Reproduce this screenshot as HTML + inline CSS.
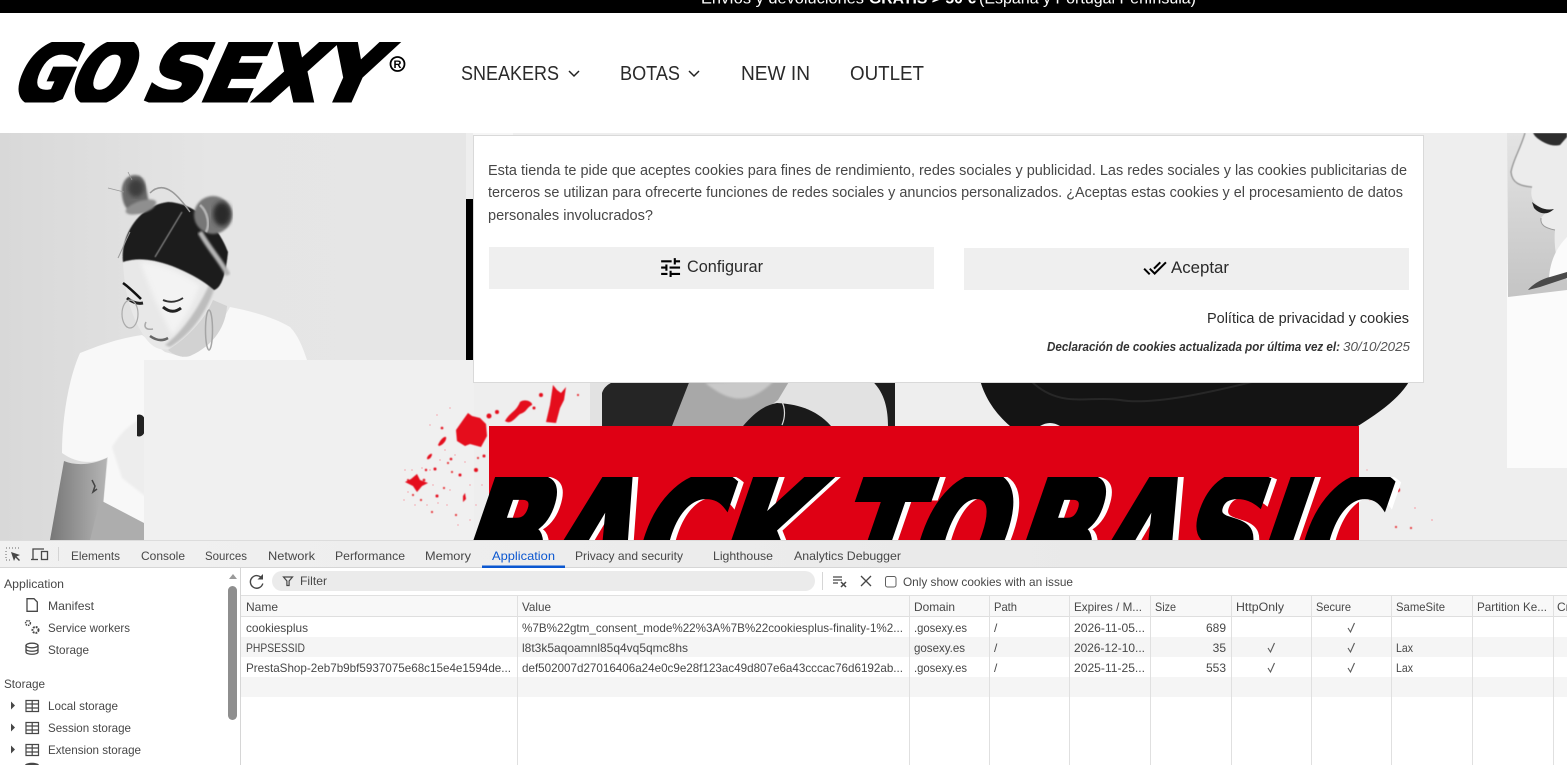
<!DOCTYPE html>
<html lang="es"><head><meta charset="utf-8"><title>Go Sexy</title>
<style>
html,body{margin:0;padding:0;width:1567px;height:765px;overflow:hidden;background:#fff}
svg{display:block}
text{font-family:"Liberation Sans",sans-serif;white-space:pre}
.d text{font-size:12px;fill:#474747}
.c text{font-size:14.5px;fill:#474747}
.n text{font-size:20px;fill:#2a2a2a}
.k text{font-family:"DejaVu Sans",sans-serif;font-weight:bold;stroke-linejoin:miter}
</style></head><body>
<svg width="1567" height="765" viewBox="0 0 1567 765" xmlns="http://www.w3.org/2000/svg">
<defs>
<filter id="b0"><feGaussianBlur stdDeviation=".4"/></filter>
<filter id="b1"><feGaussianBlur stdDeviation="1"/></filter>
<filter id="b2"><feGaussianBlur stdDeviation="2.500"/></filter>
<clipPath id="hero"><rect x="0" y="133" width="1567" height="407"/></clipPath>
<clipPath id="bar"><rect x="0" y="0" width="1567" height="13"/></clipPath>
<clipPath id="logo"><rect x="0" y="42" width="420" height="60.500"/></clipPath>
<linearGradient id="bgl" x1="0" x2="1" y1="0" y2="0"><stop offset="0" stop-color="#d8d8d8"/><stop offset=".45" stop-color="#e5e5e5"/><stop offset="1" stop-color="#e6e6e6"/></linearGradient>
<linearGradient id="arm" x1="0" x2="1" y1="0" y2="0"><stop offset="0" stop-color="#777"/><stop offset="1" stop-color="#b5b5b5"/></linearGradient>
<linearGradient id="rbg" x1="0" x2="0" y1="0" y2="1"><stop offset="0" stop-color="#e4e4e4"/><stop offset="1" stop-color="#c4c4c4"/></linearGradient>
<linearGradient id="tab" x1="0" x2="1" y1="0" y2="0"><stop offset="0" stop-color="#f1f1f1"/><stop offset=".7" stop-color="#e9e9e9"/></linearGradient>
</defs>

<!-- top bar -->
<rect width="1567" height="13" fill="#000"/>
<g clip-path="url(#bar)">
<text x="701" y="3.500" font-size="15.5" fill="#fff" textLength="163" lengthAdjust="spacingAndGlyphs">Envíos y devoluciones</text>
<text x="869" y="3.500" font-size="15.5" font-weight="bold" fill="#fff" textLength="107" lengthAdjust="spacingAndGlyphs">GRATIS &gt; 50 €</text>
<text x="979" y="3.500" font-size="15.5" fill="#fff" textLength="217" lengthAdjust="spacingAndGlyphs">(España y Portugal Península)</text>
</g>

<!-- header -->
<rect y="13" width="1567" height="120" fill="#fff"/>
<g clip-path="url(#logo)">
<g class="k" font-size="82" fill="#000" stroke="#000" stroke-width="4.500">
<text transform="translate(8 102) skewX(-24)" x="0" y="0" textLength="115" lengthAdjust="spacingAndGlyphs">GO</text>
<text transform="translate(139 102) skewX(-24)" x="0" y="0" textLength="232" lengthAdjust="spacingAndGlyphs">SEXY</text>
</g>
</g>
<circle cx="397.500" cy="64" r="7" fill="none" stroke="#000" stroke-width="1.800"/>
<text x="393.500" y="68" font-size="11" font-weight="bold" fill="#000">R</text>
<g class="n">
<text x="461" y="80" textLength="98" lengthAdjust="spacingAndGlyphs">SNEAKERS</text>
<text x="620" y="80" textLength="60" lengthAdjust="spacingAndGlyphs">BOTAS</text>
<text x="741" y="80" textLength="69" lengthAdjust="spacingAndGlyphs">NEW IN</text>
<text x="850" y="80" textLength="74" lengthAdjust="spacingAndGlyphs">OUTLET</text>
</g>
<path d="M569 71l5 5 5-5M689 71l5 5 5-5" fill="none" stroke="#222" stroke-width="1.500"/>

<!-- hero -->
<g clip-path="url(#hero)">
<rect x="0" y="133" width="1567" height="407" fill="#eeeeee"/>
<rect x="0" y="133" width="466" height="407" fill="url(#bgl)"/>
<rect x="466" y="199" width="7" height="161" fill="#000"/>
<rect x="473" y="133" width="40" height="3" fill="#f6f6f6"/>

<!-- girl -->
<g>
 <!-- shirt -->
 <path d="M80 353C100 345 120 338 142 335L165 352 183 357C205 345 220 325 230 307 255 312 275 318 290 327 298 335 303 348 307 360V400H144V540H100L108 457C92 465 76 463 62 453 62 420 68 380 80 353Z" fill="#f8f8f8"/>
 <path d="M112 447C122 430 135 420 150 415V500L122 478Z" fill="#ededed" filter="url(#b1)"/>
 <!-- arm / pants -->
 <path d="M64 461C76 466 92 465 107 458L100 540H50Z" fill="url(#arm)"/>
 <path d="M100 500L144 523V540H90Z" fill="#adadad"/>
 <path d="M137 415C142 413 146 418 146 425 146 433 142 438 137 436Z" fill="#222"/>
 <path d="M92 480l3 6-2 6 4-3" stroke="#444" stroke-width="1.500" fill="none"/>
 <!-- neck -->
 <path d="M168 350C185 340 205 320 213 300L227 306C226 325 215 345 190 356 183 358 175 356 168 350Z" fill="#d2d2d2"/>
 <!-- face -->
 <path d="M123 262C124 285 128 310 142 333 150 346 158 351 168 349 190 338 207 315 214 288L190 268 150 256Z" fill="#e8e8e8"/>
 <path d="M140 262C160 262 180 272 200 285 195 300 185 320 172 335L155 300Z" fill="#f3f3f3" filter="url(#b2)"/>
 <path d="M170 347C190 335 205 315 214 290L210 283C200 305 185 330 165 345Z" fill="#bdbdbd" filter="url(#b1)"/>
 <!-- hair -->
 <path d="M123 262C120 235 140 205 168 202 195 203 218 225 228 252 226 272 222 288 214 290 205 282 192 274 172 266 150 258 135 258 123 262Z" fill="#1a1a1a" filter="url(#b0)"/>
 <path d="M155 257L182 212" stroke="#8a8a8a" stroke-width="1.200" fill="none" filter="url(#b0)"/>
 <path d="M200 232C210 250 222 262 228 275" stroke="#b5b5b5" stroke-width="5" fill="none" filter="url(#b1)"/>
 <path d="M130 232C125 242 122 250 118 258" stroke="#999" stroke-width="1" fill="none"/>
 <!-- buns -->
 <path d="M122 195C120 180 130 172 140 176 148 182 146 195 150 205 160 205 145 215 135 212 127 212 123 205 122 195Z" fill="#6b6b6b" filter="url(#b1)"/>
 <ellipse cx="136" cy="188" rx="8" ry="9" fill="#3c3c3c" filter="url(#b2)"/>
 <ellipse cx="141" cy="207" rx="16" ry="6" transform="rotate(-18 141 207)" fill="#8f8f8f" filter="url(#b1)"/>
 <ellipse cx="213" cy="215" rx="19" ry="19" fill="#777" filter="url(#b1)"/>
 <ellipse cx="222" cy="214" rx="9" ry="12" fill="#2a2a2a" filter="url(#b2)"/>
 <path d="M200 205C208 212 210 225 206 232" stroke="#b5b5b5" stroke-width="2.500" fill="none" filter="url(#b0)"/>
 <path d="M150 193C165 178 180 198 190 212" stroke="#999" stroke-width="1.500" fill="none"/>
 <path d="M108 188l16 4M128 172l4 8" stroke="#999" stroke-width=".8" fill="none"/>
 <!-- features -->
 <path d="M123 283C130 288 136 294 141 299" stroke="#111" stroke-width="2.500" fill="none"/>
 <path d="M127 298C133 303 138 304 143 303M163 307C170 313 176 312 181 308" stroke="#222" stroke-width="3" fill="none"/>
 <path d="M163 300C170 303 177 302 183 298" stroke="#333" stroke-width="1.800" fill="none"/>
 <path d="M150 336C157 341 163 341 168 338" stroke="#666" stroke-width="2.500" fill="none"/>
 <path d="M146 322C143 328 147 330 153 329" stroke="#aaa" stroke-width="1.500" fill="none"/>
 <ellipse cx="130" cy="314" rx="8" ry="14" fill="none" stroke="#aaa" stroke-width="1.200"/>
 <ellipse cx="209" cy="330" rx="3.500" ry="20" fill="none" stroke="#a5a5a5" stroke-width="1.500"/>
</g>

<!-- second banner -->
<rect x="144" y="360" width="330" height="180" fill="#f0f0f0"/>
<rect x="474" y="360" width="1093" height="180" fill="#eeeeee"/>
<rect x="590" y="380" width="305" height="46" fill="#e2e2e2"/>
<path d="M602 426V393Q605 383 620 380H690L680 426Z" fill="#252525"/>
<path d="M672 426L690 380H790L778 400C765 410 755 415 743 426Z" fill="#a8a8a8"/>
<path d="M705 383C725 398 745 410 775 380Z" fill="#c9c9c9" filter="url(#b1)"/>
<path d="M743 426C755 412 765 405 777 403 795 404 815 408 831 426Z" fill="#1a1a1a"/>
<path d="M871 380C885 392 888 410 888 426H895V380Z" fill="#1e1e1e"/>
<path d="M781 400C786 408 785 418 782 425" stroke="#ddd" stroke-width="1.200" fill="none"/>
<path d="M980 380C985 398 995 413 1010 426H1040Q1050 420 1060 426H1358C1380 412 1400 398 1410 380Z" fill="#141414"/>
<path d="M1030 380C1060 410 1090 395 1120 400S1200 395 1260 380" stroke="#272727" stroke-width="2" fill="none"/>

<!-- splatter -->
<g fill="#f3b7bd">
<circle cx="405" cy="470" r=".9"/><circle cx="412" cy="470" r=".9"/><circle cx="408" cy="492" r=".9"/><circle cx="404" cy="500" r=".9"/>
<circle cx="415" cy="505" r=".9"/><circle cx="422" cy="468" r=".9"/><circle cx="430" cy="470" r=".9"/><circle cx="433" cy="485" r=".9"/>
<circle cx="427" cy="505" r=".9"/><circle cx="438" cy="503" r=".9"/><circle cx="450" cy="490" r=".9"/><circle cx="447" cy="505" r=".9"/>
<circle cx="445" cy="450" r=".9"/><circle cx="455" cy="455" r=".9"/><circle cx="465" cy="462" r=".9"/><circle cx="470" cy="485" r=".9"/>
<circle cx="430" cy="425" r=".9"/><circle cx="437" cy="415" r=".9"/><circle cx="450" cy="408" r=".9"/><circle cx="440" cy="460" r=".9"/>
<circle cx="476" cy="505" r=".9"/><circle cx="482" cy="485" r=".9"/><circle cx="458" cy="525" r=".9"/><circle cx="470" cy="520" r=".9"/>
<circle cx="1367" cy="470" r=".9"/><circle cx="1415" cy="508" r="1"/><circle cx="1432" cy="520" r="1"/><circle cx="1370" cy="500" r=".9"/>
</g>
<g fill="#e5091c" filter="url(#b0)">
<path d="M463 420L468 413 472 416 480 418 486 424 487 436 481 447 470 444 465 446 457 441 456 430Z"/>
<path d="M438 445C440 440 444 436 446 437 447 440 443 445 439 446Z"/>
<path d="M427 458C428 455 431 453 432 454 432 457 429 460 427 459Z"/>
<path d="M405 482L411 479 417 474 420 480 428 483 422 486 417 492 413 486Z"/>
<path d="M505 421C510 412 516 412 520 402 525 398 533 402 532 405 526 408 527 412 520 414 515 418 511 425 505 421Z"/>
<path d="M546 422L550 405 553 385 557 390 561 393 566 387 564 400 560 408 556 423Z"/>
<path d="M463 496L465 493 466 499 463 502Z"/>
<circle cx="442" cy="428" r="1.300"/><circle cx="424" cy="480" r="1.300"/><circle cx="451" cy="459" r="1.300"/><circle cx="435" cy="469" r="1.500"/>
<circle cx="437" cy="496" r="1.500"/><circle cx="460" cy="475" r="1.500"/><circle cx="448" cy="463" r="1"/><circle cx="452" cy="472" r="1"/>
<circle cx="408" cy="480" r="1"/><circle cx="426" cy="470" r="1.200"/><circle cx="413" cy="495" r="1"/><circle cx="421" cy="500" r="1"/>
<circle cx="432" cy="512" r="1"/><circle cx="444" cy="488" r="1"/><circle cx="456" cy="515" r="1"/><circle cx="476" cy="470" r="2"/>
<circle cx="484" cy="456" r="1.500"/><circle cx="478" cy="458" r="1"/><circle cx="497" cy="412" r="2"/><circle cx="489" cy="416" r="2.500"/>
<circle cx="541" cy="395" r="2"/><circle cx="534" cy="408" r="1.500"/><circle cx="578" cy="395" r="1"/>
<circle cx="1398" cy="490" r="2"/><circle cx="1411" cy="528" r="1"/><circle cx="1396" cy="527" r="1"/>
</g>

<!-- red banner -->
<rect x="489" y="426" width="870" height="114" fill="#df0014"/>
<g clip-path="url(#hero)">
<svg x="0" y="477" width="1567" height="63" viewBox="0 477 1567 63">
<g class="k" font-size="155">
<g fill="#fff" stroke="#fff" stroke-width="3">
<text transform="translate(455 590) skewX(-19)" x="0" y="0" textLength="346" lengthAdjust="spacingAndGlyphs">BACK</text>
<text transform="translate(833 590) skewX(-19)" x="0" y="0" textLength="165" lengthAdjust="spacingAndGlyphs">TO</text>
<text transform="translate(1008 590) skewX(-19)" x="0" y="0" textLength="362" lengthAdjust="spacingAndGlyphs">BASIC</text>
</g>
<g fill="#000" stroke="#000" stroke-width="6">
<text transform="translate(448 590) skewX(-19)" x="0" y="0" textLength="346" lengthAdjust="spacingAndGlyphs">BACK</text>
<text transform="translate(826 590) skewX(-19)" x="0" y="0" textLength="165" lengthAdjust="spacingAndGlyphs">TO</text>
<text transform="translate(1001 590) skewX(-19)" x="0" y="0" textLength="362" lengthAdjust="spacingAndGlyphs">BASIC</text>
</g>
</g>
</svg>
</g>

<!-- right photo -->
<rect x="1507" y="133" width="60" height="335" fill="#fbfbfb"/>
<path d="M1507 133H1567V290L1508 297Z" fill="url(#rbg)"/>
<path d="M1525 133C1520 150 1513 160 1511 172 1512 183 1520 186 1532 187 1530 195 1532 203 1540 207L1547 211 1541 218C1540 225 1545 228 1555 230 1554 240 1555 250 1557 260L1567 280V133Z" fill="#ececec"/>
<path d="M1525 133C1520 150 1513 160 1511 172 1512 183 1520 186 1532 187" fill="none" stroke="#8c8c8c" stroke-width="1.200" filter="url(#b0)"/>
<path d="M1535 136C1542 143 1552 147 1560 145L1567 137V133H1533Z" fill="#2e2e2e" filter="url(#b0)"/>
<path d="M1532 202C1538 207 1545 211 1554 209 1548 215 1540 215 1534 208Z" fill="#222"/>
<path d="M1541 218C1540 225 1545 228 1555 230" stroke="#999" stroke-width="1" fill="none"/>
<path d="M1549 278C1550 262 1556 248 1567 237V275Z" fill="#fbfbfb"/>
<path d="M1528 290C1535 282 1545 278 1550 277L1567 272V278L1540 287Z" fill="#4a4a4a"/>
</g>

<!-- cookie modal -->
<rect x="473.500" y="135.500" width="950" height="247" fill="#fff" stroke="#d9d9d9"/>
<g class="c">
<text x="488" y="175" textLength="919" lengthAdjust="spacingAndGlyphs">Esta tienda te pide que aceptes cookies para fines de rendimiento, redes sociales y publicidad. Las redes sociales y las cookies publicitarias de</text>
<text x="488" y="197" textLength="915" lengthAdjust="spacingAndGlyphs">terceros se utilizan para ofrecerte funciones de redes sociales y anuncios personalizados. ¿Aceptas estas cookies y el procesamiento de datos</text>
<text x="488" y="220" textLength="165" lengthAdjust="spacingAndGlyphs">personales involucrados?</text>
</g>
<rect x="489" y="247" width="445" height="42" fill="#efefef"/>
<rect x="964" y="248" width="445" height="42" fill="#efefef"/>
<path transform="translate(658 255) scale(1.050)" fill="#000" d="M3 17v2h6v-2H3zM3 5v2h10V5H3zm10 16v-2h8v-2h-8v-2h-2v6h2zM7 9v2H3v2h4v2h2V9H7zm14 4v-2H11v2h10zm-6-4h2V7h4V5h-4V3h-2v6z"/>
<path transform="translate(1143 256)" fill="#000" d="M18 7l-1.410-1.410-6.340 6.340 1.410 1.410L18 7zm4.240-1.410L11.660 16.170 7.480 12l-1.410 1.410L11.660 19l12-12-1.420-1.410zM.41 13.410L6 19l1.410-1.410L1.830 12 .41 13.410z"/>
<text x="687" y="272" font-size="16.500" fill="#2a2a2a" textLength="76" lengthAdjust="spacingAndGlyphs">Configurar</text>
<text x="1171" y="273" font-size="16.500" fill="#2a2a2a" textLength="58" lengthAdjust="spacingAndGlyphs">Aceptar</text>
<text x="1207" y="323" font-size="15" fill="#2a2a2a" textLength="202" lengthAdjust="spacingAndGlyphs">Política de privacidad y cookies</text>
<text x="1047" y="351" font-size="12.500" font-weight="bold" font-style="italic" fill="#333" textLength="293" lengthAdjust="spacingAndGlyphs">Declaración de cookies actualizada por última vez el:</text>
<text x="1343" y="351" font-size="12.500" font-style="italic" fill="#555" textLength="67" lengthAdjust="spacingAndGlyphs">30/10/2025</text>

<!-- devtools -->
<rect y="540" width="1567" height="225" fill="#fff"/>
<rect y="540" width="1567" height="27" fill="url(#tab)"/>
<rect y="540" width="1567" height="1" fill="#dcdcdc"/>
<rect y="567" width="1567" height="1" fill="#d6d6d6"/>
<rect x="482" y="565.500" width="83" height="2.500" fill="#0b57d0"/>

<!-- toolbar -->
<path d="M262 578.500a6.300 6.300 0 1 0 .8 5" fill="none" stroke="#474747" stroke-width="1.400"/>
<path d="M263 574v5.500h-5.500z" fill="#474747"/>
<rect x="272" y="571" width="543" height="20" rx="10" fill="#ebebeb"/>
<path d="M283.500 577h9l-3.400 4v4.500h-2.200V581z" fill="none" stroke="#474747" stroke-width="1.200"/>
<rect x="822" y="572" width="1" height="18" fill="#d6d6d6"/>
<path d="M833 577h9M833 580h9M833 583h5" stroke="#474747" stroke-width="1.300"/>
<path d="M841 582l5 5M846 582l-5 5" stroke="#474747" stroke-width="1.500"/>
<path d="M861 576l10 10M871 576l-10 10" stroke="#474747" stroke-width="1.300"/>
<rect x="885.500" y="576.500" width="10.500" height="10.500" rx="2" fill="#fff" stroke="#5f5f5f"/>

<g class="d">
<text x="71" y="560" textLength="49" lengthAdjust="spacingAndGlyphs">Elements</text>
<text x="141" y="560" textLength="44" lengthAdjust="spacingAndGlyphs">Console</text>
<text x="205" y="560" textLength="42" lengthAdjust="spacingAndGlyphs">Sources</text>
<text x="268" y="560" textLength="47" lengthAdjust="spacingAndGlyphs">Network</text>
<text x="335" y="560" textLength="70" lengthAdjust="spacingAndGlyphs">Performance</text>
<text x="425" y="560" textLength="46" lengthAdjust="spacingAndGlyphs">Memory</text>
<text x="492" y="560" textLength="63" lengthAdjust="spacingAndGlyphs" style="fill:#0b57d0">Application</text>
<text x="575" y="560" textLength="108" lengthAdjust="spacingAndGlyphs">Privacy and security</text>
<text x="713" y="560" textLength="60" lengthAdjust="spacingAndGlyphs">Lighthouse</text>
<text x="794" y="560" textLength="107" lengthAdjust="spacingAndGlyphs">Analytics Debugger</text>

<text x="4" y="588" textLength="60" lengthAdjust="spacingAndGlyphs">Application</text>
<text x="48" y="610" textLength="46" lengthAdjust="spacingAndGlyphs">Manifest</text>
<text x="48" y="632" textLength="82" lengthAdjust="spacingAndGlyphs">Service workers</text>
<text x="48" y="654" textLength="41" lengthAdjust="spacingAndGlyphs">Storage</text>
<text x="4" y="688" textLength="41" lengthAdjust="spacingAndGlyphs">Storage</text>
<text x="48" y="710" textLength="70" lengthAdjust="spacingAndGlyphs">Local storage</text>
<text x="48" y="732" textLength="83" lengthAdjust="spacingAndGlyphs">Session storage</text>
<text x="48" y="754" textLength="93" lengthAdjust="spacingAndGlyphs">Extension storage</text>

<text x="300" y="585" textLength="27" lengthAdjust="spacingAndGlyphs">Filter</text>
<text x="903" y="586" textLength="170" lengthAdjust="spacingAndGlyphs">Only show cookies with an issue</text>
</g>

<!-- devtools top icons -->
<path d="M6 548h1M9 548h1M12 548h1M15 548h1M18 548h1M6 551v1M6 554v1M6 557v1M6 560h1M9 560h1" stroke="#666" stroke-width="1" fill="none"/>
<path d="M11 552l3 9 1.500-3.500L19 561l1-1-3.500-3.500L20 555z" fill="#474747"/>
<path d="M33 559v-10h11" stroke="#474747" stroke-width="1.300" fill="none"/>
<path d="M31 559.500h7" stroke="#474747" stroke-width="1.300"/>
<rect x="41.500" y="551.500" width="6" height="8" fill="none" stroke="#474747" stroke-width="1.300"/>
<rect x="58" y="547" width="1" height="14" fill="#d4d4d4"/>

<!-- sidebar -->
<rect x="240" y="568" width="1" height="197" fill="#d6d6d6"/>
<path d="M229 579l4-5 4 5z" fill="#9a9a9a"/>
<rect x="228" y="586" width="9" height="134" rx="4.500" fill="#8e8e8e"/>
<path d="M27 598.700h7l3.300 3.300v9.300H27z" fill="none" stroke="#474747" stroke-width="1.300"/>
<circle cx="28" cy="623" r="2.400" fill="none" stroke="#474747" stroke-width="1.500" stroke-dasharray="1.500 .8"/>
<circle cx="35.500" cy="630" r="3" fill="none" stroke="#474747" stroke-width="2" stroke-dasharray="1.800 1"/>
<path d="M26 645v7c0 3 12 3 12 0v-7M26 649c0 3 12 3 12 0" fill="none" stroke="#474747" stroke-width="1.300"/>
<ellipse cx="32" cy="645.500" rx="6" ry="2.300" fill="none" stroke="#474747" stroke-width="1.300"/>
<g fill="none" stroke="#474747" stroke-width="1.200">
<path d="M26 700.500h12.500v11H26zM26 704h12.500M26 708h12.500M32.200 700.500v11"/>
<path d="M26 722.500h12.500v11H26zM26 726h12.500M26 730h12.500M32.200 722.500v11"/>
<path d="M26 744.500h12.500v11H26zM26 748h12.500M26 752h12.500M32.200 744.500v11"/>
</g>
<path d="M11 701.500l4 4-4 4zM11 723.500l4 4-4 4zM11 745.500l4 4-4 4z" fill="#474747"/>
<path d="M25 765c1-3 13-3 14 0z" fill="#474747"/>

<!-- table -->
<rect x="241" y="595" width="1326" height="1" fill="#e0e0e0"/>
<rect x="241" y="596" width="1326" height="20" fill="#f8f8f8"/>
<rect x="241" y="616" width="1326" height="1" fill="#dfdfdf"/>
<rect x="241" y="637" width="1326" height="20" fill="#f5f5f5"/>
<rect x="241" y="677" width="1326" height="20" fill="#f5f5f5"/>
<g fill="#e0e0e0">
<rect x="517" y="596" width="1" height="169"/><rect x="909" y="596" width="1" height="169"/>
<rect x="989" y="596" width="1" height="169"/><rect x="1069" y="596" width="1" height="169"/>
<rect x="1150" y="596" width="1" height="169"/><rect x="1231" y="596" width="1" height="169"/>
<rect x="1311" y="596" width="1" height="169"/><rect x="1391" y="596" width="1" height="169"/>
<rect x="1472" y="596" width="1" height="169"/><rect x="1553" y="596" width="1" height="169"/>
</g>
<g class="d">
<text x="246" y="611" textLength="32" lengthAdjust="spacingAndGlyphs">Name</text>
<text x="522" y="611" textLength="29" lengthAdjust="spacingAndGlyphs">Value</text>
<text x="914" y="611" textLength="41" lengthAdjust="spacingAndGlyphs">Domain</text>
<text x="994" y="611" textLength="23" lengthAdjust="spacingAndGlyphs">Path</text>
<text x="1074" y="611" textLength="68" lengthAdjust="spacingAndGlyphs">Expires / M...</text>
<text x="1155" y="611" textLength="21" lengthAdjust="spacingAndGlyphs">Size</text>
<text x="1236" y="611" textLength="48" lengthAdjust="spacingAndGlyphs">HttpOnly</text>
<text x="1316" y="611" textLength="35" lengthAdjust="spacingAndGlyphs">Secure</text>
<text x="1396" y="611" textLength="49" lengthAdjust="spacingAndGlyphs">SameSite</text>
<text x="1477" y="611" textLength="70" lengthAdjust="spacingAndGlyphs">Partition Ke...</text>
<text x="1557" y="611">Cr</text>

<text x="246" y="632" textLength="62" lengthAdjust="spacingAndGlyphs">cookiesplus</text>
<text x="246" y="652" textLength="59" lengthAdjust="spacingAndGlyphs">PHPSESSID</text>
<text x="246" y="672" textLength="265" lengthAdjust="spacingAndGlyphs">PrestaShop-2eb7b9bf5937075e68c15e4e1594de...</text>

<text x="522" y="632" textLength="381" lengthAdjust="spacingAndGlyphs">%7B%22gtm_consent_mode%22%3A%7B%22cookiesplus-finality-1%2...</text>
<text x="522" y="652" textLength="166" lengthAdjust="spacingAndGlyphs">l8t3k5aqoamnl85q4vq5qmc8hs</text>
<text x="522" y="672" textLength="381" lengthAdjust="spacingAndGlyphs">def502007d27016406a24e0c9e28f123ac49d807e6a43cccac76d6192ab...</text>

<text x="914" y="632" textLength="53" lengthAdjust="spacingAndGlyphs">.gosexy.es</text>
<text x="914" y="652" textLength="51" lengthAdjust="spacingAndGlyphs">gosexy.es</text>
<text x="914" y="672" textLength="53" lengthAdjust="spacingAndGlyphs">.gosexy.es</text>

<text x="994" y="632">/</text><text x="994" y="652">/</text><text x="994" y="672">/</text>

<text x="1074" y="632" textLength="71" lengthAdjust="spacingAndGlyphs">2026-11-05...</text>
<text x="1074" y="652" textLength="71" lengthAdjust="spacingAndGlyphs">2026-12-10...</text>
<text x="1074" y="672" textLength="71" lengthAdjust="spacingAndGlyphs">2025-11-25...</text>

<text x="1226" y="632" text-anchor="end">689</text>
<text x="1226" y="652" text-anchor="end">35</text>
<text x="1226" y="672" text-anchor="end">553</text>

<text x="1396" y="652" textLength="17" lengthAdjust="spacingAndGlyphs">Lax</text>
<text x="1396" y="672" textLength="17" lengthAdjust="spacingAndGlyphs">Lax</text>
</g>
<path d="M1348 628l2.500 4 4-9M1268 648l2.500 4 4-9M1348 648l2.500 4 4-9M1268 668l2.500 4 4-9M1348 668l2.500 4 4-9" fill="none" stroke="#5a5a5a" stroke-width="1.100"/>
</svg>
</body></html>
